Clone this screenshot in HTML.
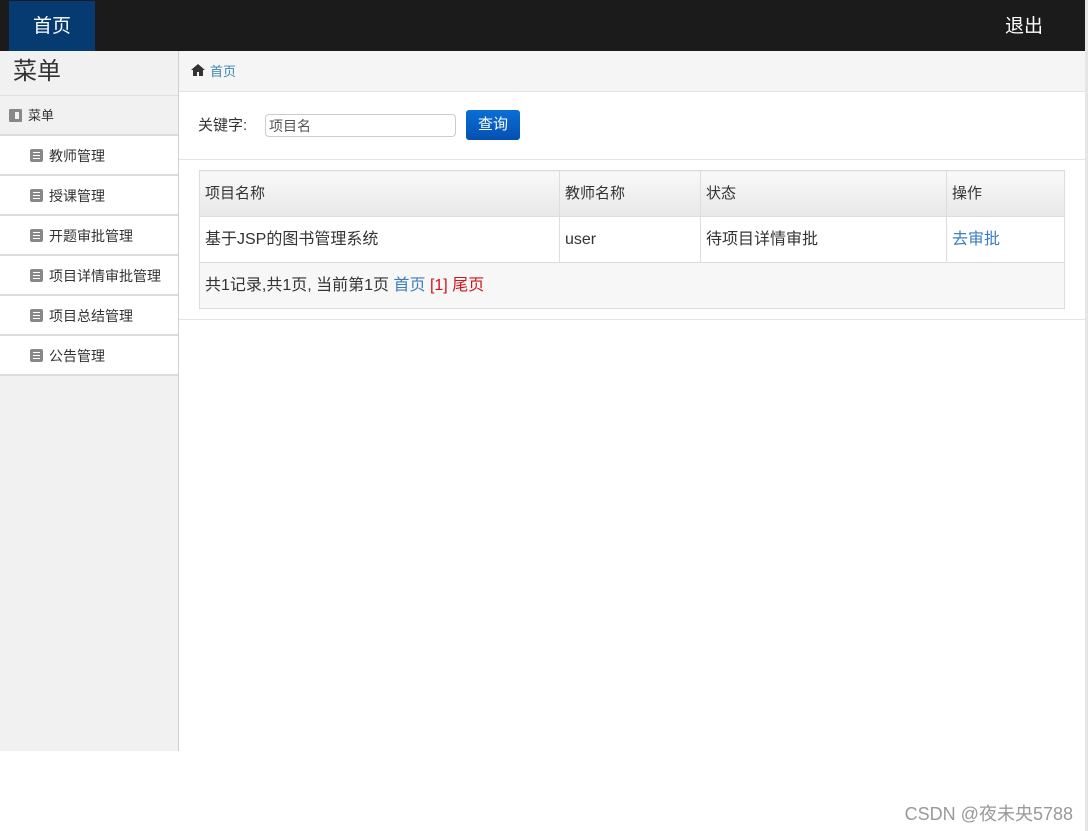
<!DOCTYPE html>
<html><head><meta charset="utf-8"><style>
*{margin:0;padding:0;box-sizing:border-box}
body{width:1088px;height:831px;background:#fff;font-family:"Liberation Sans","Noto Sans CJK SC",sans-serif;color:#333;position:relative;overflow:hidden;font-size:14px}
.top{position:absolute;left:0;top:0;width:1085px;height:51px;background:#1b1b1b}
.home{position:absolute;left:9px;top:1px;width:86px;height:50px;background:#063b72;color:#fff;font-size:19px;line-height:52px;text-align:center}
.out{position:absolute;right:42px;top:0;color:#fff;font-size:19px;line-height:54px}
.rbar{position:absolute;left:1085px;top:0;width:3px;height:831px;background:#e6e6e6}
.side{position:absolute;left:0;top:51px;width:179px;height:700px;background:#f1f1f1;border-right:1px solid #d0d0d0}
.st{height:45px;font-size:24px;line-height:42px;padding-left:13px;color:#333;border-bottom:1px solid #e0e0e0}
.sh{height:40px;line-height:40px;font-size:13px;padding-left:28px;position:relative;border-bottom:2px solid #ddd}
.sh i{position:absolute;left:9px;top:13px;width:13px;height:13px;background:#888;border-radius:1px}
.sh i:after{content:"";position:absolute;left:6px;top:3px;width:4px;height:7px;background:#f1f1f1}
.it{height:40px;line-height:40px;background:#fff;border-bottom:2px solid #ddd;padding-left:49px;font-size:14px;position:relative}
.it i{position:absolute;left:30px;top:13px;width:13px;height:13px;background:#888;border-radius:2px}
.it i:after{content:"";position:absolute;left:3px;top:3px;width:7px;height:1px;background:#fff;box-shadow:0 3px 0 #fff,0 6px 0 #fff}
.bc{position:absolute;left:179px;top:51px;width:906px;height:41px;background:#f5f5f5;border-bottom:1px solid #e3e3e3;font-size:13px;line-height:42px;padding-left:31px;color:#3a87ad}
.bc svg{position:absolute;left:12px;top:13px}
.srch{position:absolute;left:198px;top:111px;font-size:15px;line-height:30px}
.inp{position:absolute;left:265px;top:114px;width:191px;height:23px;border:1px solid #ccc;border-radius:4px;font-size:14px;line-height:22px;padding-left:3px;color:#555}
.btn{position:absolute;left:466px;top:110px;width:54px;height:30px;background:linear-gradient(#0a6fd6,#0550b0);border-radius:3px;color:#fff;font-size:15px;line-height:30px;text-align:center}
.l1{position:absolute;left:179px;top:159px;width:906px;height:1px;background:#e5e5e5}
.l2{position:absolute;left:179px;top:319px;width:906px;height:1px;background:#e5e5e5}
table{position:absolute;left:199px;top:170px;width:866px;border-collapse:collapse;font-size:15px}
td{border:1px solid #ddd;padding:0 5px;height:46px;vertical-align:middle;line-height:20px}
tr.h td{background:linear-gradient(#f9f9f9,#e8e8e8)}
tr.f td{background:#f7f7f7;font-size:16px}
tr.r td{font-size:16px}
a{color:#3a7dc0;text-decoration:none}
.red{color:#d0141b}
.wm{position:absolute;right:15px;top:800px;color:#999;font-size:18px}
</style></head><body>
<div class="top"><div class="home">首页</div><div class="out">退出</div></div>
<div class="rbar"></div>
<div class="side">
<div class="st">菜单</div>
<div class="sh"><i></i>菜单</div>
<div class="it"><i></i>教师管理</div>
<div class="it"><i></i>授课管理</div>
<div class="it"><i></i>开题审批管理</div>
<div class="it"><i></i>项目详情审批管理</div>
<div class="it"><i></i>项目总结管理</div>
<div class="it"><i></i>公告管理</div>
</div>
<div class="bc"><svg width="14" height="12" viewBox="0 0 14 12"><path d="M7 0L0 6h2v6h4V8h2v4h4V6h2z" fill="#333"/></svg>首页</div>
<div class="srch">关键字:</div>
<div class="inp">项目名</div>
<div class="btn">查询</div>
<div class="l1"></div>
<table>
<tr class="h"><td style="width:360px">项目名称</td><td style="width:141px">教师名称</td><td style="width:246px">状态</td><td>操作</td></tr>
<tr class="r"><td>基于JSP的图书管理系统</td><td>user</td><td>待项目详情审批</td><td><a>去审批</a></td></tr>
<tr class="f"><td colspan="4">共1记录,共1页, 当前第1页 <a>首页</a> <span class="red">[1] 尾页</span></td></tr>
</table>
<div class="l2"></div>
<div class="wm">CSDN @夜未央5788</div>
</body></html>
